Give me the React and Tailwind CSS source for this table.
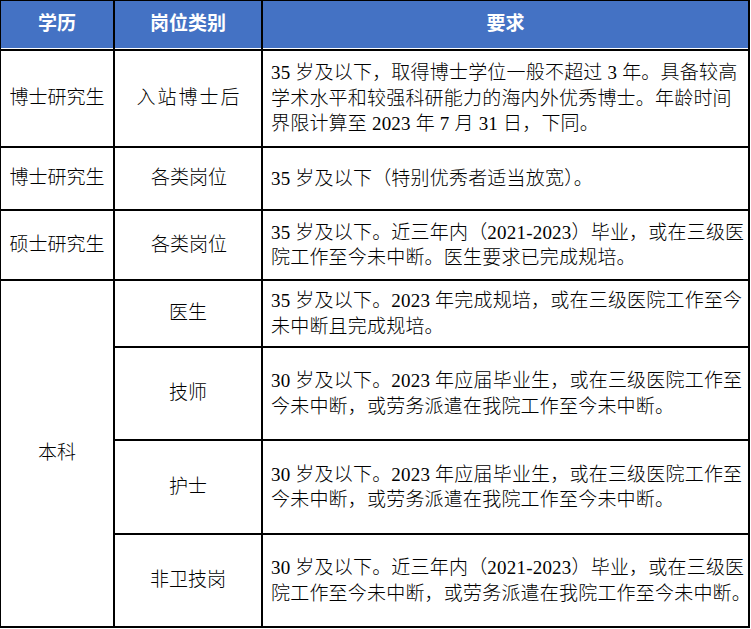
const rows = [
  { a: "博士研究生", b: "入站博士后", bt: "tracking-[2px]", h: "h-[97px]", lines: ["35 岁及以下，取得博士学位一般不超过 3 年。具备较高", "学术水平和较强科研能力的海内外优秀博士。年龄时间", "界限计算至 2023 年 7 月 31 日，下同。"] },
  { a: "博士研究生", b: "各类岗位", bt: "", h: "h-[63px]", lines: ["35 岁及以下（特别优秀者适当放宽）。"] },
  { a: "硕士研究生", b: "各类岗位", bt: "", h: "h-[70px]", lines: ["35 岁及以下。近三年内（2021-2023）毕业，或在三级医", "院工作至今未中断。医生要求已完成规培。"] },
];

const sub = [
  { b: "医生", h: "h-[67px]", lines: ["35 岁及以下。2023 年完成规培，或在三级医院工作至今", "未中断且完成规培。"] },
  { b: "技师", h: "h-[93px]", lines: ["30 岁及以下。2023 年应届毕业生，或在三级医院工作至", "今未中断，或劳务派遣在我院工作至今未中断。"] },
  { b: "护士", h: "h-[94px]", lines: ["30 岁及以下。2023 年应届毕业生，或在三级医院工作至", "今未中断，或劳务派遣在我院工作至今未中断。"] },
  { b: "非卫技岗", h: "h-[93px]", lines: ["30 岁及以下。近三年内（2021-2023）毕业，或在三级医", "院工作至今未中断，或劳务派遣在我院工作至今未中断。"] },
];

function Req({ lines }) {
  return (
    <div className="w-[487px] h-full border-r-2 border-black flex flex-col justify-center pl-2 tracking-[0.2px]">
      {lines.map((l, i) => (
        <span key={i} className="block whitespace-nowrap leading-[25.5px]">{l}</span>
      ))}
    </div>
  );
}

export default function App() {
  return (
    <div className="w-[751px] h-[629px] bg-white text-black text-[19px] font-light font-['Liberation_Serif','Noto_Sans_CJK_SC',serif]">
      <div className="w-[750px] border-t border-l border-black">
        <div className="flex h-[50px] border-b-2 border-black">
          <div className="w-[114px] h-full border-r-2 border-black">
            <div className="h-full bg-[#4472c4] border-b border-white flex items-center justify-center text-white font-bold">学历</div>
          </div>
          <div className="w-[148px] h-full border-r-2 border-black">
            <div className="h-full bg-[#4472c4] border-b border-white flex items-center justify-center text-white font-bold">岗位类别</div>
          </div>
          <div className="w-[487px] h-full border-r-2 border-black">
            <div className="h-full bg-[#4472c4] border-b border-white flex items-center justify-center text-white font-bold">要求</div>
          </div>
        </div>
        {rows.map((r, i) => (
          <div key={i} className={`flex ${r.h} border-b-2 border-black`}>
            <div className="w-[114px] h-full border-r-2 border-black flex items-center justify-center">{r.a}</div>
            <div className={`w-[148px] h-full border-r-2 border-black flex items-center justify-center pl-[2px] ${r.bt}`}>{r.b}</div>
            <Req lines={r.lines} />
          </div>
        ))}
        <div className="flex h-[347px]">
          <div className="w-[114px] h-full border-r-2 border-b-2 border-black flex items-center justify-center">本科</div>
          <div className="flex flex-col">
            {sub.map((r, i) => (
              <div key={i} className={`flex ${r.h} border-b-2 border-black`}>
                <div className="w-[148px] h-full border-r-2 border-black flex items-center justify-center">{r.b}</div>
                <Req lines={r.lines} />
              </div>
            ))}
          </div>
        </div>
      </div>
    </div>
  );
}
